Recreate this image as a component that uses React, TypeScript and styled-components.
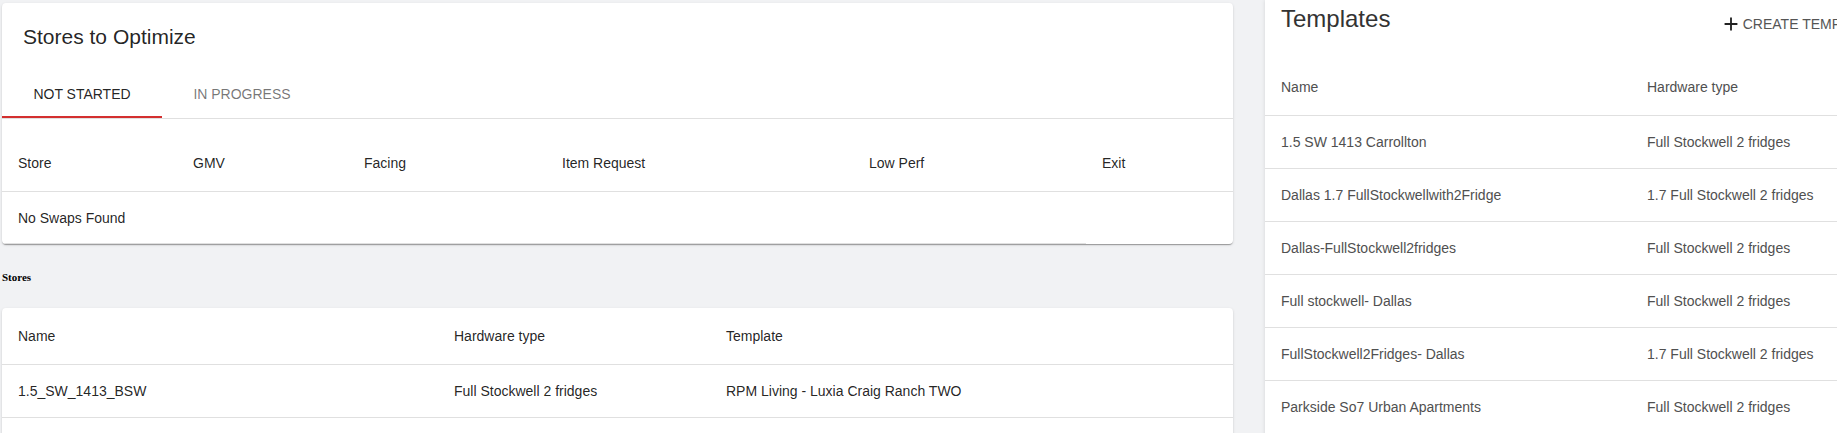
import React from "react";
import styled, { createGlobalStyle } from "styled-components";

const GlobalStyle = createGlobalStyle`
	html,
	body {
		margin: 0;
		padding: 0;
	}

	body {
		background: #f1f2f4;
		overflow: hidden;
		font-family: "Liberation Sans", Arial, sans-serif;
	}
`;

const Page = styled.div`
	display: flex;
	align-items: flex-start;
	width: max-content;
	height: 433px;
`;

const LeftColumn = styled.div`
	flex-shrink: 0;
	width: 1231px;
	margin: 3px 0 0 2px;
`;

const Card = styled.section<{ $extend?: boolean }>`
	background: #fff;
	border-radius: 4px;
	overflow: hidden;
	box-shadow: 0px 2px 1px -1px rgba(0, 0, 0, 0.2),
		0px 1px 1px 0px rgba(0, 0, 0, 0.14), 0px 1px 3px 0px rgba(0, 0, 0, 0.12);
	padding-bottom: ${(props) => (props.$extend ? "40px" : "0")};
`;

const CardTitle = styled.h2`
	margin: 0;
	padding: 20px 21px 19px;
	font-size: 21px;
	line-height: 28px;
	font-weight: 400;
	color: rgba(0, 0, 0, 0.87);
`;

const TabBar = styled.div`
	display: flex;
	border-bottom: 1px solid #e0e0e0;
`;

const Tab = styled.button<{ $active?: boolean }>`
	position: relative;
	width: 160px;
	height: 48px;
	padding: 0 12px;
	border: 0;
	background: none;
	font-family: inherit;
	font-size: 14px;
	text-transform: uppercase;
	cursor: pointer;
	color: ${(props) =>
		props.$active ? "rgba(0, 0, 0, 0.87)" : "rgba(0, 0, 0, 0.55)"};

	&::after {
		content: "";
		position: absolute;
		left: 0;
		right: 0;
		bottom: 0;
		height: 2px;
		background: ${(props) => (props.$active ? "#d32f2f" : "transparent")};
	}
`;

const Table = styled.table<{ $gap?: number; $muted?: boolean }>`
	width: 100%;
	border-collapse: collapse;
	table-layout: fixed;
	margin-top: ${(props) => props.$gap ?? 0}px;
	font-size: 14px;
	color: ${(props) => (props.$muted ? "#505050" : "rgba(0, 0, 0, 0.87)")};
`;

const Col = styled.col<{ $w?: number }>`
	width: ${(props) => (props.$w ? `${props.$w}px` : "auto")};
`;

const HeadCell = styled.th`
	padding: 16px;
	text-align: left;
	font-weight: 400;
	line-height: 24px;
	border-bottom: 1px solid #e0e0e0;
	white-space: nowrap;
`;

const Cell = styled.td<{ $bare?: boolean; $last?: boolean }>`
	padding: ${(props) => (props.$last ? "16px 16px 15px" : "16px")};
	line-height: 20px;
	border-bottom: ${(props) => (props.$bare ? "0" : "1px solid #e0e0e0")};
	white-space: nowrap;
`;

const SectionLabel = styled.h6`
	margin: 26px 0 24px;
	font-family: "Liberation Serif", "Times New Roman", serif;
	font-size: 11px;
	line-height: 14px;
	font-weight: 700;
	color: #000;
`;

const TemplatesPanel = styled.aside`
	flex-shrink: 0;
	width: 634px;
	min-height: 460px;
	margin-left: 32px;
	background: #fff;
	box-shadow: 0 0 4px rgba(0, 0, 0, 0.12);
`;

const PanelHeader = styled.div`
	display: flex;
	justify-content: space-between;
	align-items: flex-start;
	box-sizing: border-box;
	height: 59px;
	padding: 3px 16px 0;
`;

const PanelTitle = styled.h2`
	margin: 0;
	font-size: 24px;
	line-height: 32px;
	font-weight: 400;
	color: #333;
`;

const CreateButton = styled.button`
	display: flex;
	align-items: center;
	margin-top: 4px;
	padding: 6px 8px;
	border: 0;
	background: none;
	font-family: inherit;
	font-size: 14px;
	line-height: 20px;
	text-transform: uppercase;
	color: #555;
	cursor: pointer;

	svg {
		margin-right: 1px;
	}
`;

const AddIcon = () => (
	<svg width="22" height="22" viewBox="0 0 24 24" fill="#222" aria-hidden>
		<path d="M19 13h-6v6h-2v-6H5v-2h6V5h2v6h6v2z" />
	</svg>
);

const templates = [
	["1.5 SW 1413 Carrollton", "Full Stockwell 2 fridges"],
	["Dallas 1.7 FullStockwellwith2Fridge", "1.7 Full Stockwell 2 fridges"],
	["Dallas-FullStockwell2fridges", "Full Stockwell 2 fridges"],
	["Full stockwell- Dallas", "Full Stockwell 2 fridges"],
	["FullStockwell2Fridges- Dallas", "1.7 Full Stockwell 2 fridges"],
	["Parkside So7 Urban Apartments", "Full Stockwell 2 fridges"],
];

const stores = [
	["1.5_SW_1413_BSW", "Full Stockwell 2 fridges", "RPM Living - Luxia Craig Ranch TWO"],
];

export default function App() {
	return (
		<>
			<GlobalStyle />
			<Page>
				<LeftColumn>
					<Card>
						<CardTitle>Stores to Optimize</CardTitle>
						<TabBar>
							<Tab $active>Not Started</Tab>
							<Tab>In Progress</Tab>
						</TabBar>
						<Table $gap={16}>
							<colgroup>
								<Col $w={175} />
								<Col $w={171} />
								<Col $w={198} />
								<Col $w={307} />
								<Col $w={233} />
								<Col />
							</colgroup>
							<thead>
								<tr>
									<HeadCell>Store</HeadCell>
									<HeadCell>GMV</HeadCell>
									<HeadCell>Facing</HeadCell>
									<HeadCell>Item Request</HeadCell>
									<HeadCell>Low Perf</HeadCell>
									<HeadCell>Exit</HeadCell>
								</tr>
							</thead>
							<tbody>
								<tr>
									<Cell colSpan={5} $last>
										No Swaps Found
									</Cell>
									<Cell $bare $last />
								</tr>
							</tbody>
						</Table>
					</Card>

					<SectionLabel>Stores</SectionLabel>

					<Card $extend>
						<Table>
							<colgroup>
								<Col $w={436} />
								<Col $w={272} />
								<Col />
							</colgroup>
							<thead>
								<tr>
									<HeadCell>Name</HeadCell>
									<HeadCell>Hardware type</HeadCell>
									<HeadCell>Template</HeadCell>
								</tr>
							</thead>
							<tbody>
								{stores.map(([name, hardware, template]) => (
									<tr key={name}>
										<Cell>{name}</Cell>
										<Cell>{hardware}</Cell>
										<Cell>{template}</Cell>
									</tr>
								))}
							</tbody>
						</Table>
					</Card>
				</LeftColumn>

				<TemplatesPanel>
					<PanelHeader>
						<PanelTitle>Templates</PanelTitle>
						<CreateButton>
							<AddIcon />
							Create Template
						</CreateButton>
					</PanelHeader>
					<Table $muted>
						<colgroup>
							<Col $w={366} />
							<Col />
						</colgroup>
						<thead>
							<tr>
								<HeadCell>Name</HeadCell>
								<HeadCell>Hardware type</HeadCell>
							</tr>
						</thead>
						<tbody>
							{templates.map(([name, hardware]) => (
								<tr key={name}>
									<Cell>{name}</Cell>
									<Cell>{hardware}</Cell>
								</tr>
							))}
						</tbody>
					</Table>
				</TemplatesPanel>
			</Page>
		</>
	);
}
